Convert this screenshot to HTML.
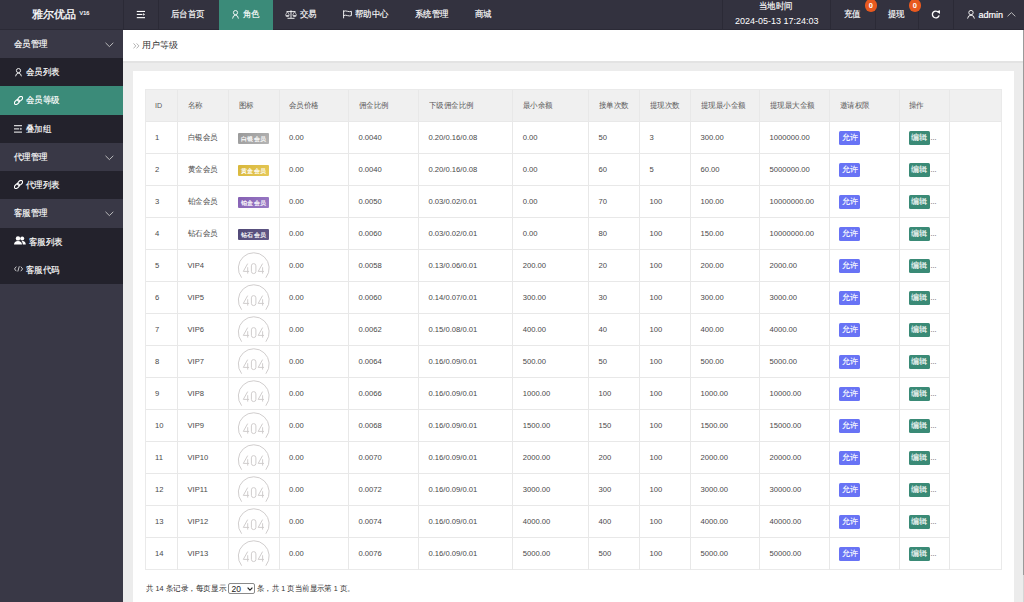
<!DOCTYPE html>
<html><head><meta charset="utf-8">
<style>
*{margin:0;padding:0;box-sizing:border-box}
html,body{width:1024px;height:602px;overflow:hidden;background:#ececec;font-family:"Liberation Sans",sans-serif}
.hdr{position:absolute;left:0;top:0;width:1024px;height:30px;background:#33323f;border-bottom:1px solid #2b2a36}
.sep{position:absolute;top:0;width:1px;height:29px;background:#2b2a36}
.nt{position:absolute;color:#fff;font-size:9px;line-height:10px;white-space:nowrap;-webkit-text-stroke:0.15px #fff}
.logo{position:absolute;left:32px;top:7px;color:#fff;font-size:11px;line-height:14px;white-space:nowrap;-webkit-text-stroke:0.3px #fff}
.logo sup{font-size:5.5px;vertical-align:top;position:relative;top:-1.5px;margin-left:3.5px;-webkit-text-stroke:0.15px #fff}
.green{background:#3b8b79}
.side{position:absolute;left:0;top:30px;width:123px;height:572px;background:#393846}
.si{position:absolute;left:0;width:123px;height:28.22px;color:#fff;font-size:9px;-webkit-text-stroke:0.15px #fff}
.si.g{background:#393846}
.si.d{background:#23222c}
.si.a{background:#3b8b79}
.sx{transform-origin:0 50%;transform:scaleX(0.935)}
.chev{position:absolute;left:105px;top:12px}
.ic{position:absolute}
.badge{position:absolute;z-index:2;top:-0.6px;width:12.2px;height:12.2px;border-radius:50%;background:#e8591f;color:#fff;font-size:7.5px;line-height:13px;text-align:center;font-weight:bold}
.dt{-webkit-text-stroke:0}
.si span{position:absolute;top:9px;line-height:10px;white-space:nowrap}
.crumb{position:absolute;left:123px;top:30px;width:901px;height:33px;background:#fff;border-bottom:2px solid #e3e3e3}
.card{position:absolute;left:133px;top:71px;width:881px;height:600px;background:#fff}
.tbl{position:absolute;left:145px;top:89px;width:857px;height:481px;border:1px solid #eaeaea}
.th{position:absolute;left:0;top:0;width:855px;height:32px;background:#f0f0f0;border-bottom:1px solid #e8e8e8}
.vl{position:absolute;width:1px;background:#e8e8e8}
.hl{position:absolute;height:1px;background:#e8e8e8}
.c{position:absolute;font-size:7.65px;line-height:9px;color:#4a4a4a;white-space:nowrap}
.cj{transform-origin:0 0;transform:scaleX(0.935)}
.hc{color:#5a5a5a}
.bdg{position:absolute;width:31px;height:11px;color:#fff;font-size:6.4px;line-height:11px;text-align:center;border-radius:1px;letter-spacing:0.3px;text-indent:0.3px;-webkit-text-stroke:0.15px #fff}
.yes{position:absolute;width:21.4px;height:13.8px;background:#6873f5;color:#fff;font-size:7.5px;line-height:13.8px;text-align:center;border-radius:1.5px;-webkit-text-stroke:0.1px #fff}
.edit{position:absolute;width:21.1px;height:13.8px;background:#3a8a76;color:#fff;font-size:7.5px;line-height:13.8px;text-align:center;border-radius:1.5px;-webkit-text-stroke:0.1px #fff}
.dots{position:absolute;font-size:7px;color:#444;line-height:9px}
.foot{position:absolute;left:145px;top:583px;font-size:7.65px;line-height:10px;color:#333;white-space:nowrap}
.selb{position:absolute;left:227.5px;top:582.7px;width:27px;height:11px;border:1px solid #8a8a8a;border-radius:2px;font-size:8.5px;line-height:9px;color:#222;background:#fff}
.sel{display:inline-block;vertical-align:middle;width:28px;height:11px;border:1px solid #888;border-radius:2px;font-size:7.65px;line-height:9px;padding-left:3px;position:relative;top:-1px;background:#fff}
</style></head><body>
<div class="hdr">
  <div class="logo">雅尔优品<sup>V16</sup></div>
  <div class="sep" style="left:123px"></div>
  <div class="sep" style="left:158px"></div>
  <svg style="position:absolute;left:136px;top:10px" width="10" height="9" viewBox="0 0 10 9"><rect x="0.8" y="0.9" width="8.2" height="1.1" fill="#fff"/><rect x="0.8" y="3.9" width="5.6" height="1.1" fill="#fff"/><path d="M7.2 3.1 L9 4.45 L7.2 5.8Z" fill="#fff"/><rect x="0.8" y="7.1" width="8.2" height="1.1" fill="#fff"/></svg>
  <div class="nt sx" style="left:171px;top:9px">后台首页</div>
  <div class="green" style="position:absolute;left:219px;top:0;width:54px;height:30px"></div>
  <svg style="position:absolute;left:232px;top:10px" width="7" height="9" viewBox="0 0 7 9"><circle cx="3.5" cy="2.6" r="2.1" fill="none" stroke="#fff" stroke-width="0.9"/><path d="M0.6 8.6 Q0.9 5.2 3.5 5.2 Q6.1 5.2 6.4 8.6" fill="none" stroke="#fff" stroke-width="0.9"/></svg>
  <div class="nt sx" style="left:243px;top:9px">角色</div>
  <svg style="position:absolute;left:285px;top:10px" width="12" height="9" viewBox="0 0 12 9"><path d="M1.5 1.6 H10.5 M6 0.3 V7.8 M2.5 8.3 H9.5" stroke="#fff" stroke-width="0.9" fill="none"/><path d="M0.4 5.2 H4.4 A2 1.6 0 0 1 0.4 5.2Z M7.6 5.2 H11.6 A2 1.6 0 0 1 7.6 5.2Z" fill="#fff"/><path d="M0.4 5.2 L2.4 1.6 L4.4 5.2 M7.6 5.2 L9.6 1.6 L11.6 5.2" stroke="#fff" stroke-width="0.6" fill="none"/></svg>
  <div class="nt sx" style="left:300px;top:9px">交易</div>
  <svg style="position:absolute;left:343px;top:10px" width="9" height="9" viewBox="0 0 9 9"><path d="M0.6 0.3 V8.3 M0.6 1.3 Q2.5 0.5 4.5 1.3 Q6.5 2 8.4 1.3 V5.6 Q6.5 6.3 4.5 5.6 Q2.5 4.8 0.6 5.6" fill="none" stroke="#fff" stroke-width="0.9"/></svg>
  <div class="nt sx" style="left:355px;top:9px">帮助中心</div>
  <div class="nt sx" style="left:415px;top:9px">系统管理</div>
  <div class="nt sx" style="left:475px;top:9px">商城</div>
  <div class="sep" style="left:722px"></div>
  <div class="nt sx" style="left:759px;top:1px">当地时间</div>
  <div class="nt dt" style="left:735px;top:15.5px">2024-05-13 17:24:03</div>
  <div class="sep" style="left:830px"></div>
  <div class="nt sx" style="left:844px;top:9px">充值</div>
  <div class="badge" style="left:864.8px">0</div>
  <div class="sep" style="left:874.5px"></div>
  <div class="nt sx" style="left:888px;top:9px">提现</div>
  <div class="badge" style="left:908.8px">0</div>
  <div class="sep" style="left:918px"></div>
  <svg style="position:absolute;left:931px;top:10px" width="10" height="9" viewBox="0 0 10 9"><path d="M7.5 2.4 A3.4 3.4 0 1 0 8.1 5.3" fill="none" stroke="#fff" stroke-width="1.35"/><path d="M5.6 1.3 L9.0 0.3 L8.9 3.9Z" fill="#fff"/></svg>
  <div class="sep" style="left:953px"></div>
  <svg style="position:absolute;left:967px;top:10px" width="8" height="9" viewBox="0 0 8 9"><circle cx="4" cy="2.6" r="2.2" fill="none" stroke="#fff" stroke-width="0.9"/><path d="M0.6 8.6 Q0.9 5.2 4 5.2 Q7.1 5.2 7.4 8.6" fill="none" stroke="#fff" stroke-width="0.9"/></svg>
  <div class="nt" style="left:978.5px;top:10px;-webkit-text-stroke:0.2px #fff">admin</div>
  <svg style="position:absolute;left:1007px;top:12px" width="9" height="5" viewBox="0 0 9 5"><path d="M0.5 4.3 L4.4 0.6 L8.3 4.3" fill="none" stroke="#c8c8c8" stroke-width="0.9"/></svg>
</div>
<div class="side">
  <div class="si g" style="top:0"><span class="sx" style="left:14px">会员管理</span><svg class="chev" width="9" height="6" viewBox="0 0 9 6"><path d="M0.5 0.8 L4.4 4.6 L8.3 0.8" fill="none" stroke="#c8c8c8" stroke-width="0.9"/></svg></div>
  <div class="si d" style="top:28.22px"><svg class="ic" style="left:15px;top:10px" width="7" height="9" viewBox="0 0 7 9"><circle cx="3.5" cy="2.6" r="2.1" fill="none" stroke="#fff" stroke-width="0.9"/><path d="M0.6 8.3 Q0.9 5.2 3.5 5.2 Q6.1 5.2 6.4 8.3" fill="none" stroke="#fff" stroke-width="0.9"/></svg><span class="sx" style="left:26px">会员列表</span></div>
  <div class="si a" style="top:56.44px"><svg class="ic" style="left:13.6px;top:9.1px" width="9" height="9" viewBox="0 0 9 9"><g fill="none" stroke="#fff" stroke-width="1.15"><ellipse cx="6.1" cy="2.9" rx="2.9" ry="1.85" transform="rotate(-45 6.1 2.9)"/><ellipse cx="2.9" cy="6.1" rx="2.9" ry="1.85" transform="rotate(-45 2.9 6.1)"/></g></svg><span class="sx" style="left:26px">会员等级</span></div>
  <div class="si d" style="top:84.66px"><svg class="ic" style="left:14px;top:10px" width="9" height="8" viewBox="0 0 9 8"><rect x="0" y="0.2" width="8" height="1" fill="#fff"/><rect x="0" y="3.4" width="5.2" height="1" fill="#fff"/><path d="M6.3 2.7 L8.2 3.9 L6.3 5.1Z" fill="#fff"/><rect x="0" y="6.6" width="8" height="1" fill="#fff"/></svg><span class="sx" style="left:26px">叠加组</span></div>
  <div class="si g" style="top:112.88px"><span class="sx" style="left:14px">代理管理</span><svg class="chev" width="9" height="6" viewBox="0 0 9 6"><path d="M0.5 0.8 L4.4 4.6 L8.3 0.8" fill="none" stroke="#c8c8c8" stroke-width="0.9"/></svg></div>
  <div class="si d" style="top:141.10px"><svg class="ic" style="left:13.6px;top:9.1px" width="9" height="9" viewBox="0 0 9 9"><g fill="none" stroke="#fff" stroke-width="1.15"><ellipse cx="6.1" cy="2.9" rx="2.9" ry="1.85" transform="rotate(-45 6.1 2.9)"/><ellipse cx="2.9" cy="6.1" rx="2.9" ry="1.85" transform="rotate(-45 2.9 6.1)"/></g></svg><span class="sx" style="left:26px">代理列表</span></div>
  <div class="si g" style="top:169.32px"><span class="sx" style="left:14px">客服管理</span><svg class="chev" width="9" height="6" viewBox="0 0 9 6"><path d="M0.5 0.8 L4.4 4.6 L8.3 0.8" fill="none" stroke="#c8c8c8" stroke-width="0.9"/></svg></div>
  <div class="si d" style="top:197.54px"><svg class="ic" style="left:14.2px;top:8.6px" width="12" height="9" viewBox="0 0 12 9"><circle cx="4" cy="2.4" r="2.2" fill="#fff"/><path d="M0 8.5 Q0.2 5 4 5 Q7.8 5 8 8.5Z" fill="#fff"/><circle cx="8.2" cy="2.4" r="2" fill="#fff"/><path d="M8.6 5 Q11.6 5.2 11.8 8.5 H8.8 Q8.8 6.3 7.6 5.2Z" fill="#fff"/></svg><span class="sx" style="left:29px">客服列表</span></div>
  <div class="si d" style="top:225.76px"><svg class="ic" style="left:13.6px;top:10.3px" width="10" height="6" viewBox="0 0 10 6"><path d="M2.3 0.6 L0.5 2.9 L2.3 5.2 M6.8 0.6 L8.6 2.9 L6.8 5.2 M5.3 0.3 L3.8 5.5" fill="none" stroke="#fff" stroke-width="0.75"/></svg><span class="sx" style="left:26px">客服代码</span></div>
</div>
<div class="crumb">
  <svg style="position:absolute;left:9.6px;top:13.3px" width="7" height="6" viewBox="0 0 7 6"><path d="M0.5 0.4 L2.8 2.9 L0.5 5.4 M3.6 0.4 L5.9 2.9 L3.6 5.4" fill="none" stroke="#aaa" stroke-width="0.9"/></svg>
  <div class="c" style="left:19px;top:11px;color:#333;font-size:9px">用户等级</div>
</div>
<div class="card"></div>
<div class="tbl" id="tbl"><div class="th"></div>
<div class="vl" style="left:31.00px;top:0;height:32px"></div>
<div class="vl" style="left:82.00px;top:0;height:32px"></div>
<div class="vl" style="left:132.50px;top:0;height:32px"></div>
<div class="vl" style="left:202.00px;top:0;height:32px"></div>
<div class="vl" style="left:272.00px;top:0;height:32px"></div>
<div class="vl" style="left:366.25px;top:0;height:32px"></div>
<div class="vl" style="left:442.10px;top:0;height:32px"></div>
<div class="vl" style="left:493.10px;top:0;height:32px"></div>
<div class="vl" style="left:544.00px;top:0;height:32px"></div>
<div class="vl" style="left:613.00px;top:0;height:32px"></div>
<div class="vl" style="left:683.00px;top:0;height:32px"></div>
<div class="vl" style="left:752.60px;top:0;height:32px"></div>
<div class="vl" style="left:803.00px;top:0;height:32px"></div>
<div class="vl" style="left:31.00px;top:32px;height:448px"></div>
<div class="vl" style="left:82.00px;top:32px;height:448px"></div>
<div class="vl" style="left:132.50px;top:32px;height:448px"></div>
<div class="vl" style="left:202.00px;top:32px;height:448px"></div>
<div class="vl" style="left:272.00px;top:32px;height:448px"></div>
<div class="vl" style="left:366.25px;top:32px;height:448px"></div>
<div class="vl" style="left:442.10px;top:32px;height:448px"></div>
<div class="vl" style="left:493.10px;top:32px;height:448px"></div>
<div class="vl" style="left:544.00px;top:32px;height:448px"></div>
<div class="vl" style="left:613.00px;top:32px;height:448px"></div>
<div class="vl" style="left:683.00px;top:32px;height:448px"></div>
<div class="vl" style="left:752.60px;top:32px;height:448px"></div>
<div class="vl" style="left:803.00px;top:32px;height:448px"></div>
<div class="hl" style="left:0;top:63px;width:803.5px"></div>
<div class="hl" style="left:0;top:95px;width:803.5px"></div>
<div class="hl" style="left:0;top:127px;width:803.5px"></div>
<div class="hl" style="left:0;top:159px;width:803.5px"></div>
<div class="hl" style="left:0;top:191px;width:803.5px"></div>
<div class="hl" style="left:0;top:223px;width:803.5px"></div>
<div class="hl" style="left:0;top:255px;width:803.5px"></div>
<div class="hl" style="left:0;top:287px;width:803.5px"></div>
<div class="hl" style="left:0;top:319px;width:803.5px"></div>
<div class="hl" style="left:0;top:351px;width:803.5px"></div>
<div class="hl" style="left:0;top:383px;width:803.5px"></div>
<div class="hl" style="left:0;top:415px;width:803.5px"></div>
<div class="hl" style="left:0;top:447px;width:803.5px"></div>
<div class="c hc cj" style="left:9.00px;top:11px">ID</div>
<div class="c hc cj" style="left:41.50px;top:11px">名称</div>
<div class="c hc cj" style="left:92.50px;top:11px">图标</div>
<div class="c hc cj" style="left:143.00px;top:11px">会员价格</div>
<div class="c hc cj" style="left:212.50px;top:11px">佣金比例</div>
<div class="c hc cj" style="left:282.50px;top:11px">下级佣金比例</div>
<div class="c hc cj" style="left:376.75px;top:11px">最小余额</div>
<div class="c hc cj" style="left:452.60px;top:11px">接单次数</div>
<div class="c hc cj" style="left:503.60px;top:11px">提现次数</div>
<div class="c hc cj" style="left:554.50px;top:11px">提现最小金额</div>
<div class="c hc cj" style="left:623.50px;top:11px">提现最大金额</div>
<div class="c hc cj" style="left:693.50px;top:11px">邀请权限</div>
<div class="c hc cj" style="left:763.10px;top:11px">操作</div>
<div class="c" style="left:9.00px;top:42.60px">1</div>
<div class="c cj" style="left:41.50px;top:42.60px">白银会员</div>
<div class="bdg" style="left:92.00px;top:43px;background:linear-gradient(135deg,#9a9a9a,#b5b5b5)">白银会员</div>
<div class="c" style="left:143.00px;top:42.60px">0.00</div>
<div class="c" style="left:212.50px;top:42.60px">0.0040</div>
<div class="c" style="left:282.50px;top:42.60px">0.20/0.16/0.08</div>
<div class="c" style="left:376.75px;top:42.60px">0.00</div>
<div class="c" style="left:452.60px;top:42.60px">50</div>
<div class="c" style="left:503.60px;top:42.60px">3</div>
<div class="c" style="left:554.50px;top:42.60px">300.00</div>
<div class="c" style="left:623.50px;top:42.60px">1000000.00</div>
<div class="yes" style="left:693.10px;top:41.20px">允许</div>
<div class="edit" style="left:762.90px;top:41.20px">编辑</div>
<div class="dots" style="left:784.5px;top:43px">...</div>
<div class="c" style="left:9.00px;top:74.60px">2</div>
<div class="c cj" style="left:41.50px;top:74.60px">黄金会员</div>
<div class="bdg" style="left:92.00px;top:75px;background:linear-gradient(135deg,#d8b73a,#e6c95a)">黄金会员</div>
<div class="c" style="left:143.00px;top:74.60px">0.00</div>
<div class="c" style="left:212.50px;top:74.60px">0.0040</div>
<div class="c" style="left:282.50px;top:74.60px">0.20/0.16/0.08</div>
<div class="c" style="left:376.75px;top:74.60px">0.00</div>
<div class="c" style="left:452.60px;top:74.60px">60</div>
<div class="c" style="left:503.60px;top:74.60px">5</div>
<div class="c" style="left:554.50px;top:74.60px">60.00</div>
<div class="c" style="left:623.50px;top:74.60px">5000000.00</div>
<div class="yes" style="left:693.10px;top:73.20px">允许</div>
<div class="edit" style="left:762.90px;top:73.20px">编辑</div>
<div class="dots" style="left:784.5px;top:75px">...</div>
<div class="c" style="left:9.00px;top:106.60px">3</div>
<div class="c cj" style="left:41.50px;top:106.60px">铂金会员</div>
<div class="bdg" style="left:92.00px;top:107px;background:linear-gradient(135deg,#8560b3,#9b7cc6)">铂金会员</div>
<div class="c" style="left:143.00px;top:106.60px">0.00</div>
<div class="c" style="left:212.50px;top:106.60px">0.0050</div>
<div class="c" style="left:282.50px;top:106.60px">0.03/0.02/0.01</div>
<div class="c" style="left:376.75px;top:106.60px">0.00</div>
<div class="c" style="left:452.60px;top:106.60px">70</div>
<div class="c" style="left:503.60px;top:106.60px">100</div>
<div class="c" style="left:554.50px;top:106.60px">100.00</div>
<div class="c" style="left:623.50px;top:106.60px">10000000.00</div>
<div class="yes" style="left:693.10px;top:105.20px">允许</div>
<div class="edit" style="left:762.90px;top:105.20px">编辑</div>
<div class="dots" style="left:784.5px;top:107px">...</div>
<div class="c" style="left:9.00px;top:138.60px">4</div>
<div class="c cj" style="left:41.50px;top:138.60px">钻石会员</div>
<div class="bdg" style="left:92.00px;top:139px;background:linear-gradient(135deg,#514876,#625a88)">钻石会员</div>
<div class="c" style="left:143.00px;top:138.60px">0.00</div>
<div class="c" style="left:212.50px;top:138.60px">0.0060</div>
<div class="c" style="left:282.50px;top:138.60px">0.03/0.02/0.01</div>
<div class="c" style="left:376.75px;top:138.60px">0.00</div>
<div class="c" style="left:452.60px;top:138.60px">80</div>
<div class="c" style="left:503.60px;top:138.60px">100</div>
<div class="c" style="left:554.50px;top:138.60px">150.00</div>
<div class="c" style="left:623.50px;top:138.60px">10000000.00</div>
<div class="yes" style="left:693.10px;top:137.20px">允许</div>
<div class="edit" style="left:762.90px;top:137.20px">编辑</div>
<div class="dots" style="left:784.5px;top:139px">...</div>
<div class="c" style="left:9.00px;top:170.60px">5</div>
<div class="c" style="left:41.50px;top:170.60px">VIP4</div>
<svg style="position:absolute;left:90.00px;top:160px" width="36" height="31" viewBox="0 0 36 31"><g fill="none" stroke="#cdcaca" stroke-width="0.95"><path d="M5.65 27.7 A15.4 15.4 0 1 1 29.85 27.7"/><path d="M11.7 13.6 L7.3 21.4 H13.1 M11.7 17.2 V23.6 M26.6 13.6 L22.2 21.4 H28.0 M26.6 17.2 V23.6"/><rect x="15.4" y="13.6" width="4.5" height="10" rx="2.25"/></g></svg>
<div class="c" style="left:143.00px;top:170.60px">0.00</div>
<div class="c" style="left:212.50px;top:170.60px">0.0058</div>
<div class="c" style="left:282.50px;top:170.60px">0.13/0.06/0.01</div>
<div class="c" style="left:376.75px;top:170.60px">200.00</div>
<div class="c" style="left:452.60px;top:170.60px">20</div>
<div class="c" style="left:503.60px;top:170.60px">100</div>
<div class="c" style="left:554.50px;top:170.60px">200.00</div>
<div class="c" style="left:623.50px;top:170.60px">2000.00</div>
<div class="yes" style="left:693.10px;top:169.20px">允许</div>
<div class="edit" style="left:762.90px;top:169.20px">编辑</div>
<div class="dots" style="left:784.5px;top:171px">...</div>
<div class="c" style="left:9.00px;top:202.60px">6</div>
<div class="c" style="left:41.50px;top:202.60px">VIP5</div>
<svg style="position:absolute;left:90.00px;top:192px" width="36" height="31" viewBox="0 0 36 31"><g fill="none" stroke="#cdcaca" stroke-width="0.95"><path d="M5.65 27.7 A15.4 15.4 0 1 1 29.85 27.7"/><path d="M11.7 13.6 L7.3 21.4 H13.1 M11.7 17.2 V23.6 M26.6 13.6 L22.2 21.4 H28.0 M26.6 17.2 V23.6"/><rect x="15.4" y="13.6" width="4.5" height="10" rx="2.25"/></g></svg>
<div class="c" style="left:143.00px;top:202.60px">0.00</div>
<div class="c" style="left:212.50px;top:202.60px">0.0060</div>
<div class="c" style="left:282.50px;top:202.60px">0.14/0.07/0.01</div>
<div class="c" style="left:376.75px;top:202.60px">300.00</div>
<div class="c" style="left:452.60px;top:202.60px">30</div>
<div class="c" style="left:503.60px;top:202.60px">100</div>
<div class="c" style="left:554.50px;top:202.60px">300.00</div>
<div class="c" style="left:623.50px;top:202.60px">3000.00</div>
<div class="yes" style="left:693.10px;top:201.20px">允许</div>
<div class="edit" style="left:762.90px;top:201.20px">编辑</div>
<div class="dots" style="left:784.5px;top:203px">...</div>
<div class="c" style="left:9.00px;top:234.60px">7</div>
<div class="c" style="left:41.50px;top:234.60px">VIP6</div>
<svg style="position:absolute;left:90.00px;top:224px" width="36" height="31" viewBox="0 0 36 31"><g fill="none" stroke="#cdcaca" stroke-width="0.95"><path d="M5.65 27.7 A15.4 15.4 0 1 1 29.85 27.7"/><path d="M11.7 13.6 L7.3 21.4 H13.1 M11.7 17.2 V23.6 M26.6 13.6 L22.2 21.4 H28.0 M26.6 17.2 V23.6"/><rect x="15.4" y="13.6" width="4.5" height="10" rx="2.25"/></g></svg>
<div class="c" style="left:143.00px;top:234.60px">0.00</div>
<div class="c" style="left:212.50px;top:234.60px">0.0062</div>
<div class="c" style="left:282.50px;top:234.60px">0.15/0.08/0.01</div>
<div class="c" style="left:376.75px;top:234.60px">400.00</div>
<div class="c" style="left:452.60px;top:234.60px">40</div>
<div class="c" style="left:503.60px;top:234.60px">100</div>
<div class="c" style="left:554.50px;top:234.60px">400.00</div>
<div class="c" style="left:623.50px;top:234.60px">4000.00</div>
<div class="yes" style="left:693.10px;top:233.20px">允许</div>
<div class="edit" style="left:762.90px;top:233.20px">编辑</div>
<div class="dots" style="left:784.5px;top:235px">...</div>
<div class="c" style="left:9.00px;top:266.60px">8</div>
<div class="c" style="left:41.50px;top:266.60px">VIP7</div>
<svg style="position:absolute;left:90.00px;top:256px" width="36" height="31" viewBox="0 0 36 31"><g fill="none" stroke="#cdcaca" stroke-width="0.95"><path d="M5.65 27.7 A15.4 15.4 0 1 1 29.85 27.7"/><path d="M11.7 13.6 L7.3 21.4 H13.1 M11.7 17.2 V23.6 M26.6 13.6 L22.2 21.4 H28.0 M26.6 17.2 V23.6"/><rect x="15.4" y="13.6" width="4.5" height="10" rx="2.25"/></g></svg>
<div class="c" style="left:143.00px;top:266.60px">0.00</div>
<div class="c" style="left:212.50px;top:266.60px">0.0064</div>
<div class="c" style="left:282.50px;top:266.60px">0.16/0.09/0.01</div>
<div class="c" style="left:376.75px;top:266.60px">500.00</div>
<div class="c" style="left:452.60px;top:266.60px">50</div>
<div class="c" style="left:503.60px;top:266.60px">100</div>
<div class="c" style="left:554.50px;top:266.60px">500.00</div>
<div class="c" style="left:623.50px;top:266.60px">5000.00</div>
<div class="yes" style="left:693.10px;top:265.20px">允许</div>
<div class="edit" style="left:762.90px;top:265.20px">编辑</div>
<div class="dots" style="left:784.5px;top:267px">...</div>
<div class="c" style="left:9.00px;top:298.60px">9</div>
<div class="c" style="left:41.50px;top:298.60px">VIP8</div>
<svg style="position:absolute;left:90.00px;top:288px" width="36" height="31" viewBox="0 0 36 31"><g fill="none" stroke="#cdcaca" stroke-width="0.95"><path d="M5.65 27.7 A15.4 15.4 0 1 1 29.85 27.7"/><path d="M11.7 13.6 L7.3 21.4 H13.1 M11.7 17.2 V23.6 M26.6 13.6 L22.2 21.4 H28.0 M26.6 17.2 V23.6"/><rect x="15.4" y="13.6" width="4.5" height="10" rx="2.25"/></g></svg>
<div class="c" style="left:143.00px;top:298.60px">0.00</div>
<div class="c" style="left:212.50px;top:298.60px">0.0066</div>
<div class="c" style="left:282.50px;top:298.60px">0.16/0.09/0.01</div>
<div class="c" style="left:376.75px;top:298.60px">1000.00</div>
<div class="c" style="left:452.60px;top:298.60px">100</div>
<div class="c" style="left:503.60px;top:298.60px">100</div>
<div class="c" style="left:554.50px;top:298.60px">1000.00</div>
<div class="c" style="left:623.50px;top:298.60px">10000.00</div>
<div class="yes" style="left:693.10px;top:297.20px">允许</div>
<div class="edit" style="left:762.90px;top:297.20px">编辑</div>
<div class="dots" style="left:784.5px;top:299px">...</div>
<div class="c" style="left:9.00px;top:330.60px">10</div>
<div class="c" style="left:41.50px;top:330.60px">VIP9</div>
<svg style="position:absolute;left:90.00px;top:320px" width="36" height="31" viewBox="0 0 36 31"><g fill="none" stroke="#cdcaca" stroke-width="0.95"><path d="M5.65 27.7 A15.4 15.4 0 1 1 29.85 27.7"/><path d="M11.7 13.6 L7.3 21.4 H13.1 M11.7 17.2 V23.6 M26.6 13.6 L22.2 21.4 H28.0 M26.6 17.2 V23.6"/><rect x="15.4" y="13.6" width="4.5" height="10" rx="2.25"/></g></svg>
<div class="c" style="left:143.00px;top:330.60px">0.00</div>
<div class="c" style="left:212.50px;top:330.60px">0.0068</div>
<div class="c" style="left:282.50px;top:330.60px">0.16/0.09/0.01</div>
<div class="c" style="left:376.75px;top:330.60px">1500.00</div>
<div class="c" style="left:452.60px;top:330.60px">150</div>
<div class="c" style="left:503.60px;top:330.60px">100</div>
<div class="c" style="left:554.50px;top:330.60px">1500.00</div>
<div class="c" style="left:623.50px;top:330.60px">15000.00</div>
<div class="yes" style="left:693.10px;top:329.20px">允许</div>
<div class="edit" style="left:762.90px;top:329.20px">编辑</div>
<div class="dots" style="left:784.5px;top:331px">...</div>
<div class="c" style="left:9.00px;top:362.60px">11</div>
<div class="c" style="left:41.50px;top:362.60px">VIP10</div>
<svg style="position:absolute;left:90.00px;top:352px" width="36" height="31" viewBox="0 0 36 31"><g fill="none" stroke="#cdcaca" stroke-width="0.95"><path d="M5.65 27.7 A15.4 15.4 0 1 1 29.85 27.7"/><path d="M11.7 13.6 L7.3 21.4 H13.1 M11.7 17.2 V23.6 M26.6 13.6 L22.2 21.4 H28.0 M26.6 17.2 V23.6"/><rect x="15.4" y="13.6" width="4.5" height="10" rx="2.25"/></g></svg>
<div class="c" style="left:143.00px;top:362.60px">0.00</div>
<div class="c" style="left:212.50px;top:362.60px">0.0070</div>
<div class="c" style="left:282.50px;top:362.60px">0.16/0.09/0.01</div>
<div class="c" style="left:376.75px;top:362.60px">2000.00</div>
<div class="c" style="left:452.60px;top:362.60px">200</div>
<div class="c" style="left:503.60px;top:362.60px">100</div>
<div class="c" style="left:554.50px;top:362.60px">2000.00</div>
<div class="c" style="left:623.50px;top:362.60px">20000.00</div>
<div class="yes" style="left:693.10px;top:361.20px">允许</div>
<div class="edit" style="left:762.90px;top:361.20px">编辑</div>
<div class="dots" style="left:784.5px;top:363px">...</div>
<div class="c" style="left:9.00px;top:394.60px">12</div>
<div class="c" style="left:41.50px;top:394.60px">VIP11</div>
<svg style="position:absolute;left:90.00px;top:384px" width="36" height="31" viewBox="0 0 36 31"><g fill="none" stroke="#cdcaca" stroke-width="0.95"><path d="M5.65 27.7 A15.4 15.4 0 1 1 29.85 27.7"/><path d="M11.7 13.6 L7.3 21.4 H13.1 M11.7 17.2 V23.6 M26.6 13.6 L22.2 21.4 H28.0 M26.6 17.2 V23.6"/><rect x="15.4" y="13.6" width="4.5" height="10" rx="2.25"/></g></svg>
<div class="c" style="left:143.00px;top:394.60px">0.00</div>
<div class="c" style="left:212.50px;top:394.60px">0.0072</div>
<div class="c" style="left:282.50px;top:394.60px">0.16/0.09/0.01</div>
<div class="c" style="left:376.75px;top:394.60px">3000.00</div>
<div class="c" style="left:452.60px;top:394.60px">300</div>
<div class="c" style="left:503.60px;top:394.60px">100</div>
<div class="c" style="left:554.50px;top:394.60px">3000.00</div>
<div class="c" style="left:623.50px;top:394.60px">30000.00</div>
<div class="yes" style="left:693.10px;top:393.20px">允许</div>
<div class="edit" style="left:762.90px;top:393.20px">编辑</div>
<div class="dots" style="left:784.5px;top:395px">...</div>
<div class="c" style="left:9.00px;top:426.60px">13</div>
<div class="c" style="left:41.50px;top:426.60px">VIP12</div>
<svg style="position:absolute;left:90.00px;top:416px" width="36" height="31" viewBox="0 0 36 31"><g fill="none" stroke="#cdcaca" stroke-width="0.95"><path d="M5.65 27.7 A15.4 15.4 0 1 1 29.85 27.7"/><path d="M11.7 13.6 L7.3 21.4 H13.1 M11.7 17.2 V23.6 M26.6 13.6 L22.2 21.4 H28.0 M26.6 17.2 V23.6"/><rect x="15.4" y="13.6" width="4.5" height="10" rx="2.25"/></g></svg>
<div class="c" style="left:143.00px;top:426.60px">0.00</div>
<div class="c" style="left:212.50px;top:426.60px">0.0074</div>
<div class="c" style="left:282.50px;top:426.60px">0.16/0.09/0.01</div>
<div class="c" style="left:376.75px;top:426.60px">4000.00</div>
<div class="c" style="left:452.60px;top:426.60px">400</div>
<div class="c" style="left:503.60px;top:426.60px">100</div>
<div class="c" style="left:554.50px;top:426.60px">4000.00</div>
<div class="c" style="left:623.50px;top:426.60px">40000.00</div>
<div class="yes" style="left:693.10px;top:425.20px">允许</div>
<div class="edit" style="left:762.90px;top:425.20px">编辑</div>
<div class="dots" style="left:784.5px;top:427px">...</div>
<div class="c" style="left:9.00px;top:458.60px">14</div>
<div class="c" style="left:41.50px;top:458.60px">VIP13</div>
<svg style="position:absolute;left:90.00px;top:448px" width="36" height="31" viewBox="0 0 36 31"><g fill="none" stroke="#cdcaca" stroke-width="0.95"><path d="M5.65 27.7 A15.4 15.4 0 1 1 29.85 27.7"/><path d="M11.7 13.6 L7.3 21.4 H13.1 M11.7 17.2 V23.6 M26.6 13.6 L22.2 21.4 H28.0 M26.6 17.2 V23.6"/><rect x="15.4" y="13.6" width="4.5" height="10" rx="2.25"/></g></svg>
<div class="c" style="left:143.00px;top:458.60px">0.00</div>
<div class="c" style="left:212.50px;top:458.60px">0.0076</div>
<div class="c" style="left:282.50px;top:458.60px">0.16/0.09/0.01</div>
<div class="c" style="left:376.75px;top:458.60px">5000.00</div>
<div class="c" style="left:452.60px;top:458.60px">500</div>
<div class="c" style="left:503.60px;top:458.60px">100</div>
<div class="c" style="left:554.50px;top:458.60px">5000.00</div>
<div class="c" style="left:623.50px;top:458.60px">50000.00</div>
<div class="yes" style="left:693.10px;top:457.20px">允许</div>
<div class="edit" style="left:762.90px;top:457.20px">编辑</div>
<div class="dots" style="left:784.5px;top:459px">...</div></div>
<div class="foot" id="fa" style="left:145.5px;top:583.5px;transform-origin:0 0;transform:scaleX(0.946)">共 14 条记录，每页显示</div>
<div class="selb"><span style="position:absolute;left:3px;top:1px">20</span><svg style="position:absolute;left:18.5px;top:3.3px" width="6" height="4" viewBox="0 0 6 4"><path d="M0.6 0.6 L3 3.1 L5.4 0.6" fill="none" stroke="#222" stroke-width="1.2"/></svg></div>
<div class="foot" id="fc" style="left:256.6px;top:583.5px;transform-origin:0 0;transform:scaleX(0.93)">条，共 1 页当前显示第 1 页。</div>
<div style="position:absolute;left:1022.6px;top:30px;width:1.4px;height:545px;background:#9a9a9a"></div>
<div style="position:absolute;left:1022.6px;top:575px;width:1.4px;height:27px;background:#d6d6d6"></div>
</body></html>
